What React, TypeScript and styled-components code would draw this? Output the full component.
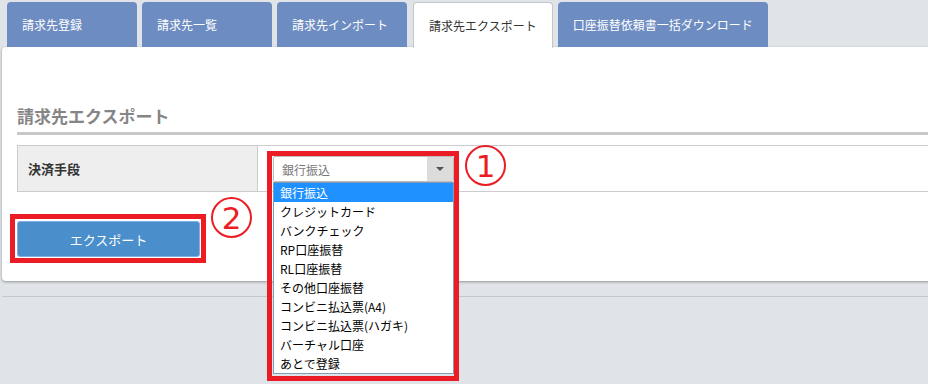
import React from 'react';
import styled, { createGlobalStyle } from 'styled-components';

const GlobalStyle = createGlobalStyle`
  html, body {
    margin: 0;
    padding: 0;
    background: #e0e3e7;
    overflow: hidden;
  }
  body {
    font-family: 'Noto Sans CJK JP', 'Noto Sans', sans-serif;
    color: #333;
  }
  * {
    box-sizing: border-box;
  }
`;

const Page = styled.div`
  width: 928px;
  height: 384px;
  overflow: hidden;
`;

const TabBar = styled.div`
  display: flex;
  align-items: flex-end;
  gap: 5px;
  padding: 2px 0 0 7px;
  height: 47px;
  position: relative;
  z-index: 2;
`;

const Tab = styled.div<{ $active?: boolean }>`
  display: flex;
  align-items: center;
  height: ${({ $active }) => ($active ? '46px' : '45px')};
  min-width: 130px;
  padding: 0 15px;
  margin-bottom: ${({ $active }) => ($active ? '-1px' : '0')};
  margin-left: ${({ $active }) => ($active ? '1px' : '0')};
  border-radius: 4px 4px 0 0;
  font-size: 12px;
  line-height: 1;
  white-space: nowrap;
  background: ${({ $active }) => ($active ? '#fff' : '#6d8cc1')};
  color: ${({ $active }) => ($active ? '#333' : '#fff')};
  border: ${({ $active }) => ($active ? '1px solid #c4c6c9' : 'none')};
  border-bottom: none;
`;

const Panel = styled.div`
  margin-left: 2px;
  margin-right: -20px;
  background: #fff;
  border-radius: 4px 0 0 4px;
  box-shadow: 0 1px 3px rgba(0, 0, 0, 0.35);
  padding: 57px 0 24px 15px;
  height: 234px;
  position: relative;
  z-index: 1;
`;

const Heading = styled.h2`
  margin: 0;
  font-size: 17px;
  font-weight: 700;
  line-height: 24px;
  color: #858585;
  padding-bottom: 4px;
  border-bottom: 3px solid #c8c8c8;
`;

const FormRow = styled.div`
  display: grid;
  grid-template-columns: 241px 1fr;
  margin-top: 10px;
  height: 47px;
  border-top: 1px solid #cccccc;
  border-bottom: 1px solid #cccccc;
`;

const LabelCell = styled.div`
  display: flex;
  align-items: center;
  padding-left: 10px;
  background: #eeeeee;
  border-left: 1px solid #cccccc;
  border-right: 1px solid #cccccc;
  font-size: 13px;
  font-weight: 700;
  color: #333;
`;

const ValueCell = styled.div`
  display: flex;
  align-items: center;
  padding-left: 15px;
`;

const SelectWrap = styled.div`
  position: relative;
  width: 181px;
  height: 26px;
  margin-top: 1px;
`;

const SelectBox = styled.div`
  display: flex;
  height: 26px;
  border: 1px solid #bdbdbd;
  border-radius: 2px;
  background: #fff;
  overflow: hidden;
`;

const SelectValue = styled.span`
  flex: 1;
  display: flex;
  align-items: center;
  padding-left: 8px;
  font-size: 12px;
  color: #777;
`;

const SelectArrow = styled.span`
  width: 26px;
  background: #dcdcdc;
  display: flex;
  align-items: center;
  justify-content: center;

  &::after {
    content: '';
    border-left: 4px solid transparent;
    border-right: 4px solid transparent;
    border-top: 4px solid #555;
  }
`;

const OptionList = styled.ul`
  position: absolute;
  top: 26px;
  left: 0;
  width: 181px;
  margin: 0;
  padding: 0;
  list-style: none;
  background: #fff;
  border: 1px solid #7f9db9;
  z-index: 3;
`;

const Option = styled.li<{ $selected?: boolean }>`
  height: 19px;
  line-height: 19px;
  padding-left: 6px;
  font-size: 12px;
  white-space: nowrap;
  background: ${({ $selected }) => ($selected ? '#1e90ff' : 'transparent')};
  color: ${({ $selected }) => ($selected ? '#fff' : '#000')};
`;

const RedFrame = styled.div<{ $top: number; $left: number; $w: number; $h: number }>`
  position: absolute;
  top: ${({ $top }) => $top}px;
  left: ${({ $left }) => $left}px;
  width: ${({ $w }) => $w}px;
  height: ${({ $h }) => $h}px;
  border: 5px solid #ec1c24;
  pointer-events: none;
  z-index: 4;
`;

const Marker = styled.span<{ $top: number; $left: number }>`
  position: absolute;
  top: ${({ $top }) => $top}px;
  left: ${({ $left }) => $left}px;
  width: 41px;
  height: 41px;
  border: 2px solid #ec1c24;
  border-radius: 50%;
  display: flex;
  align-items: center;
  justify-content: center;
  color: #ec1c24;
  font-family: 'DejaVu Sans', sans-serif;
  font-size: 31px;
  font-weight: 400;
  line-height: 1;
  padding-top: 2px;
  z-index: 4;
`;

const ButtonWrap = styled.div`
  position: relative;
  width: 183px;
  margin-top: 29px;
`;

const ExportButton = styled.button`
  width: 183px;
  height: 36px;
  border: 1px solid #7fb0e0;
  border-radius: 3px;
  background: #4a8ecb;
  color: #fff;
  font-family: 'Noto Sans CJK JP', sans-serif;
  font-size: 13px;
  cursor: pointer;
`;

const BottomRule = styled.div`
  margin: 15px 0 0 2px;
  height: 1px;
  background: #c4c7cb;
`;

const tabs = ['請求先登録', '請求先一覧', '請求先インポート', '請求先エクスポート', '口座振替依頼書一括ダウンロード'];
const options = [
  '銀行振込',
  'クレジットカード',
  'バンクチェック',
  'RP口座振替',
  'RL口座振替',
  'その他口座振替',
  'コンビニ払込票(A4)',
  'コンビニ払込票(ハガキ)',
  'バーチャル口座',
  'あとで登録',
];

export default function App() {
  return (
    <Page>
      <GlobalStyle />
      <TabBar>
        {tabs.map((t, i) => (
          <Tab key={t} $active={i === 3}>{t}</Tab>
        ))}
      </TabBar>
      <Panel>
        <Heading>請求先エクスポート</Heading>
        <FormRow>
          <LabelCell>決済手段</LabelCell>
          <ValueCell>
            <SelectWrap>
              <SelectBox>
                <SelectValue>銀行振込</SelectValue>
                <SelectArrow />
              </SelectBox>
              <OptionList>
                {options.map((o, i) => (
                  <Option key={o} $selected={i === 0}>{o}</Option>
                ))}
              </OptionList>
              <RedFrame $top={-5} $left={-6} $w={192} $h={230} />
              <Marker $top={-11} $left={192}>1</Marker>
            </SelectWrap>
          </ValueCell>
        </FormRow>
        <ButtonWrap>
          <ExportButton>エクスポート</ExportButton>
          <RedFrame $top={-7} $left={-7} $w={196} $h={49} />
          <Marker $top={-24} $left={194}>2</Marker>
        </ButtonWrap>
      </Panel>
      <BottomRule />
    </Page>
  );
}
